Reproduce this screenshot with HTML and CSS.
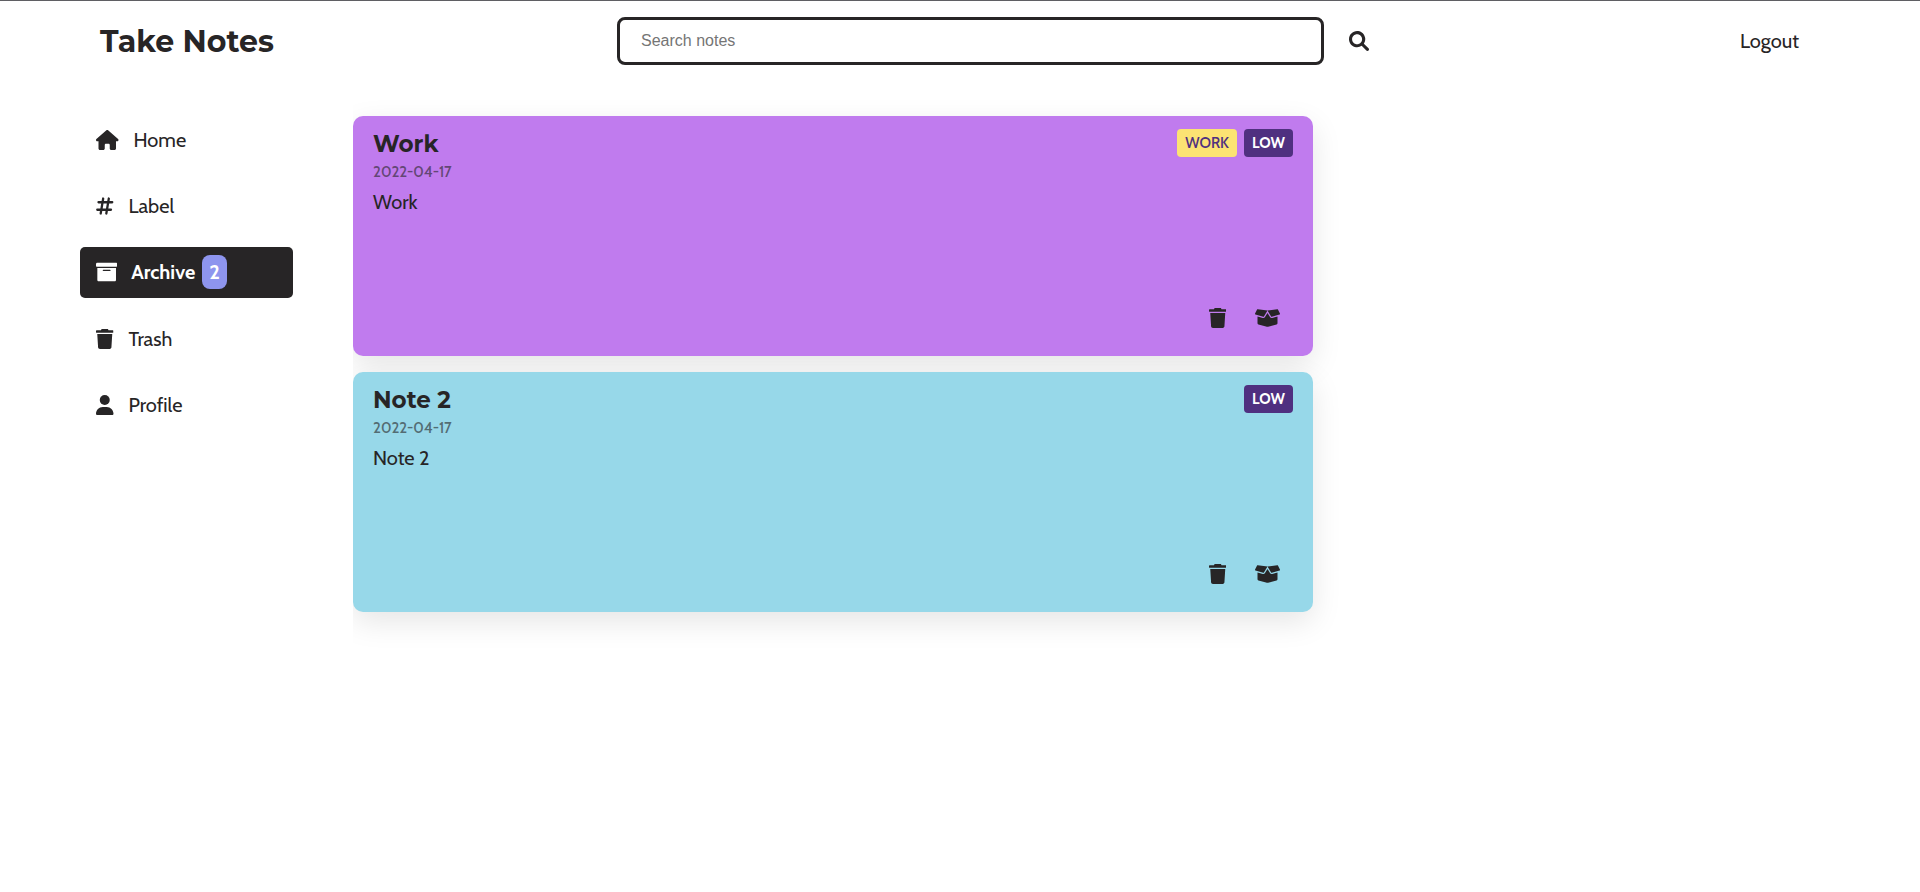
FILE: index.html
```html
<!DOCTYPE html>
<html lang="en">
<head>
<meta charset="utf-8">
<title>Take Notes</title>
<link rel="stylesheet" href="styles.css">
</head>
<body>
<svg class="sprite" aria-hidden="true">
  <symbol id="trash" viewBox="0 0 448 512"><path d="M53.21 467c1.562 24.84 23.02 45 47.9 45h245.8c24.88 0 46.33-20.16 47.9-45L416 128H32L53.21 467zM432 32H320l-11.58-23.16c-2.709-5.42-8.25-8.844-14.31-8.844H153.9c-6.061 0-11.6 3.424-14.31 8.844L128 32H16c-8.836 0-16 7.162-16 16V80c0 8.836 7.164 16 16 16h416c8.838 0 16-7.164 16-16V48C448 39.16 440.8 32 432 32z"/></symbol>
  <symbol id="box-open" viewBox="0 0 640 512"><path d="M425.7 256c-16.9 0-32.8-9-41.4-23.4L320 126l-64.2 106.6c-8.7 14.5-24.6 23.5-41.5 23.5-4.5 0-9-.6-13.3-1.9L64 215v178c0 14.7 10 27.5 24.2 31l216.2 54.1c10.2 2.5 20.9 2.5 31 0L551.8 424c14.2-3.6 24.2-16.4 24.2-31V215l-137 39.1c-4.3 1.3-8.8 1.9-13.3 1.9zm212.6-112.2L586.8 41c-3.1-6.2-9.8-9.8-16.7-8.9L320 64l91.7 152.1c3.8 6.3 11.4 9.3 18.5 7.3l197.9-56.5c9.9-2.9 14.7-13.9 10.2-23.1zM53.2 41L1.7 143.8c-4.6 9.2.3 20.2 10.1 23l197.9 56.5c7.1 2 14.7-1 18.5-7.3L320 64 69.8 32.1c-6.9-.8-13.5 2.7-16.6 8.9z"/></symbol>
</svg>
<header class="topbar">
  <h1 class="brand">Take Notes</h1>
  <form class="search" role="search">
    <input class="search-input" type="text" placeholder="Search notes" aria-label="Search notes">
    <button class="icon-button" type="button" aria-label="Search">
      <svg class="icon" viewBox="0 0 512 512"><path d="M500.3 443.7l-119.7-119.7c27.22-40.41 40.65-90.9 33.46-144.7C401.8 87.79 326.8 13.32 235.2 1.723C99.01-15.51-15.51 99.01 1.724 235.2c11.6 91.64 86.08 166.7 177.6 178.9c53.8 7.189 104.3-6.236 144.7-33.46l119.7 119.7c15.62 15.62 40.95 15.62 56.57 0C515.9 484.7 515.9 459.3 500.3 443.7zM79.1 208c0-70.58 57.42-128 128-128s128 57.42 128 128c0 70.58-57.42 128-128 128S79.1 278.6 79.1 208z"/></svg>
    </button>
  </form>
  <button class="logout" type="button">Logout</button>
</header>
<div class="layout">
  <nav class="sidebar">
    <a class="nav-link" href="#home"><svg class="icon" viewBox="0 0 576 512"><path d="M575.8 255.5C575.8 273.5 560.8 287.6 543.8 287.6H511.8L512.5 447.7C512.5 450.5 512.3 453.1 512 455.8V472C512 494.1 494.1 512 472 512H392C369.9 512 352 494.1 352 472V384C352 366.3 337.7 352 320 352H256C238.3 352 224 366.3 224 384V472C224 494.1 206.1 512 184 512H104C81.91 512 64 494.1 64 472V287.6H32.05C14.02 287.6 0 273.5 0 255.5C0 246.5 3.004 238.5 10.01 231.5L266.4 8.016C273.4 1.002 281.4 0 288.4 0C295.4 0 303.4 2.004 309.5 7.014L564.8 231.5C572.8 238.5 576.9 246.5 575.8 255.5z"/></svg>Home</a>
    <a class="nav-link" href="#label"><svg class="icon icon-hash" viewBox="0 0 448 512"><path d="M64 160H416M32 352H384M184 64L120 448M328 64L264 448"/></svg>Label</a>
    <a class="nav-link active" href="#archive" aria-current="page"><svg class="icon" viewBox="0 16 512 480"><path d="M32 448c0 17.7 14.3 32 32 32h384c17.7 0 32-14.3 32-32V160H32v288zm128-232c0-8.8 7.2-16 16-16h160c8.8 0 16 7.2 16 16s-7.2 16-16 16H176c-8.8 0-16-7.2-16-16zM480 32H32C14.3 32 0 46.3 0 64v48c0 8.8 7.2 16 16 16h480c8.8 0 16-7.2 16-16V64c0-17.7-14.3-32-32-32z" fill-rule="evenodd"/></svg>Archive<span class="count">2</span></a>
    <a class="nav-link" href="#trash-page"><svg class="icon" viewBox="0 0 448 512"><use href="#trash"/></svg>Trash</a>
    <a class="nav-link" href="#profile"><svg class="icon" viewBox="0 0 448 512"><circle cx="224" cy="128" r="128"/><path d="M274.7 304H173.3C77.61 304 0 381.6 0 477.3c0 19.14 15.52 34.67 34.66 34.67h378.7C432.5 512 448 496.5 448 477.3C448 381.6 370.4 304 274.7 304z"/></svg>Profile</a>
  </nav>
  <main class="notes">
    <article class="note note-purple">
      <div class="note-head">
        <h2 class="note-title">Work</h2>
        <div class="tags"><span class="tag tag-label">WORK</span><span class="tag tag-priority">LOW</span></div>
      </div>
      <time class="note-date" datetime="2022-04-17">2022-04-17</time>
      <p class="note-body">Work</p>
      <div class="note-actions">
        <button class="icon-button" type="button" aria-label="Delete"><svg class="icon" viewBox="0 0 448 512"><use href="#trash"/></svg></button>
        <button class="icon-button" type="button" aria-label="Unarchive"><svg class="icon" viewBox="0 0 640 512"><use href="#box-open"/></svg></button>
      </div>
    </article>
    <article class="note note-blue">
      <div class="note-head">
        <h2 class="note-title">Note 2</h2>
        <div class="tags"><span class="tag tag-priority">LOW</span></div>
      </div>
      <time class="note-date" datetime="2022-04-17">2022-04-17</time>
      <p class="note-body">Note 2</p>
      <div class="note-actions">
        <button class="icon-button" type="button" aria-label="Delete"><svg class="icon" viewBox="0 0 448 512"><use href="#trash"/></svg></button>
        <button class="icon-button" type="button" aria-label="Unarchive"><svg class="icon" viewBox="0 0 640 512"><use href="#box-open"/></svg></button>
      </div>
    </article>
  </main>
</div>
</body>
</html>
```
FILE: styles.css
```css
:root {
  --ink: #272526;
  --heading: Montserrat, Inter, sans-serif;
  --text: Cabin, Lato, sans-serif;
}

* {
  box-sizing: border-box;
}

body {
  margin: 0;
  border-top: 1px solid #5f5f63;
  background: #fff;
  color: var(--ink);
  font-family: var(--text);
  font-size: 20px;
  line-height: 24px;
}

button {
  padding: 0;
  border: 0;
  background: none;
  color: inherit;
  font: inherit;
  cursor: pointer;
}

.sprite {
  display: none;
}

.icon {
  display: block;
  height: 20px;
  fill: currentColor;
}

.icon-hash {
  fill: none;
  stroke: currentColor;
  stroke-width: 58;
  stroke-linecap: round;
}

.topbar {
  display: grid;
  grid-template-columns: 517fr 752fr 430fr;
  align-items: center;
  padding: 16px 121px 16px 100px;
}

.brand {
  margin: 0;
  padding-top: 2px;
  font-family: var(--heading);
  font-size: 30px;
  font-weight: 700;
  line-height: 40px;
}

.search {
  display: flex;
  align-items: center;
  gap: 25px;
}

.search-input {
  flex: 1;
  min-width: 0;
  height: 48px;
  padding: 0 21px;
  border: 3px solid var(--ink);
  border-radius: 8px;
  background: #fff;
  font: 16px "Liberation Sans", sans-serif;
}

.search-input::placeholder {
  color: #757575;
}

.logout {
  justify-self: end;
}

.layout {
  display: grid;
  grid-template-columns: 213px 1fr;
  column-gap: 60px;
  padding-left: 80px;
}

.sidebar {
  display: flex;
  flex-direction: column;
  gap: 16px;
  padding-top: 34px;
}

.nav-link {
  display: flex;
  align-items: center;
  min-height: 50px;
  padding: 8px 16px;
  border-radius: 5px;
  color: inherit;
  text-decoration: none;
}

.nav-link .icon {
  margin-right: 15px;
}

.nav-link.active {
  padding-bottom: 9px;
  background: var(--ink);
  color: #fff;
  font-weight: 700;
}

.nav-link.active .icon {
  margin-right: 14px;
}

.count {
  margin-left: 7px;
  padding: 5px 7px;
  border-radius: 8px;
  background: #8e95ee;
}

.notes {
  display: flex;
  flex-direction: column;
  gap: 16px;
  padding: 35px 0 60px;
  overflow: hidden;
}

.note {
  display: flex;
  flex-direction: column;
  width: 50vw;
  min-height: 240px;
  padding: 12px 20px 28px;
  border-radius: 10px;
  box-shadow: 0 10px 30px rgba(0, 0, 0, 0.1);
}

.note-purple {
  background: #c07bee;
}

.note-blue {
  background: #97d8e9;
}

.note-head {
  display: flex;
  align-items: flex-start;
  justify-content: space-between;
}

.note-title {
  margin: 0;
  font-family: var(--heading);
  font-size: 23px;
  font-weight: 700;
  line-height: 32px;
}

.tags {
  display: flex;
  gap: 7px;
  padding-top: 1px;
}

.tag {
  padding: 2px 8px;
  border-radius: 4px;
  font-size: 15px;
  font-weight: 700;
}

.tag-label {
  background: #fce373;
  color: #4f3080;
  font-weight: 500;
}

.tag-priority {
  background: #4f3080;
  color: #fff;
}

.note-date {
  font-size: 15px;
  font-weight: 500;
  opacity: 0.6;
}

.note-body {
  margin: 6px 0 0;
}

.note-actions {
  display: flex;
  justify-content: flex-end;
  gap: 29px;
  margin-top: auto;
  padding-right: 13px;
}
```
